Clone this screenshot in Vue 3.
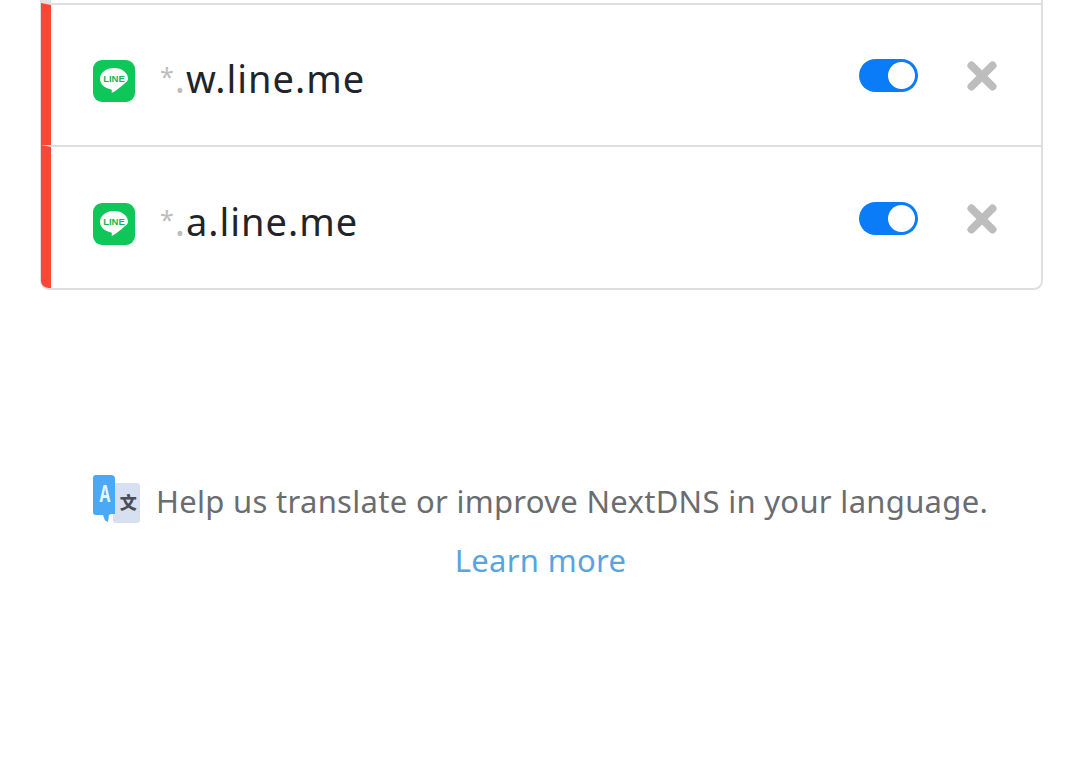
<template>
  <div class="page">
    <div class="card">
      <div class="stub"></div>
      <div v-for="domain in domains" :key="domain" class="row">
        <svg class="logo" viewBox="0 0 42 42">
          <rect width="42" height="42" rx="9" fill="#0fc659" />
          <path d="M21 8c-8 0-14 4.800-14 10.800 0 5.400 4.800 9.700 11.200 10.600.9.200.7 1 .5 2-.1.700-.1 1.600.9 1.100 1.500-.8 8-5 11-8.300 2.700-2 4.400-3.400 4.400-5.400C35 12.800 29 8 21 8z" fill="#fff" />
          <text x="21" y="22.300" class="logo-text">LINE</text>
        </svg>
        <div class="domain">
          <span class="star">*</span><span class="dot">.</span>{{ domain }}
        </div>
        <div class="toggle"><span class="knob"></span></div>
        <svg class="remove" viewBox="0 0 30 30">
          <path d="M4.500 4.500 25.500 25.500M25.500 4.500 4.500 25.500" stroke="#bdbdbd" stroke-width="8" stroke-linecap="round" />
        </svg>
      </div>
    </div>

    <div class="help">
      <div class="help-line">
        <svg class="translate" viewBox="0 0 47 48">
          <rect x="20" y="8" width="27" height="40" rx="3" fill="#d6e0f1" />
          <path d="M3 0h15a4 4 0 0 1 4 4v35h-4l-2 1-1 7-3-1.500-2-5.500H3a3 3 0 0 1-3-3V3a3 3 0 0 1 3-3z" fill="#4aa8f5" />
          <text x="6.500" y="27" class="translate-a" textLength="11" lengthAdjust="spacingAndGlyphs">A</text>
          <text x="35.500" y="34" class="translate-zh">文</text>
        </svg>
        <span>Help us translate or improve NextDNS in your language.</span>
      </div>
      <a class="learn">Learn more</a>
    </div>
  </div>
</template>

<script setup>
const domains = ['w.line.me', 'a.line.me'];
</script>

<style>
html,
body {
  background: #fff;
}
</style>

<style scoped>
.page {
  height: 767px;
  overflow: hidden;
  padding: 0 37px 0 40px;
  font-family: "Noto Sans", sans-serif;
}

.card {
  border: solid #dedede;
  border-width: 0 2px 2px 1px;
  border-radius: 0 0 9px 9px;
  overflow: hidden;
}

.stub {
  height: 3px;
  background: #fff;
  border-left: 10px solid #e2e2e2;
}

.row {
  display: flex;
  align-items: center;
  height: 140px;
  border-top: 2px solid #dedede;
  border-left: 10px solid #fb4539;
  padding: 0 44px 0 42px;
}

.row:last-child {
  padding-top: 1px;
}

.logo {
  width: 42px;
  height: 42px;
  margin-top: 11px;
  flex-shrink: 0;
}

.logo-text {
  font: 700 9.500px "Liberation Sans", sans-serif;
  fill: #12b857;
  text-anchor: middle;
}

.domain {
  margin-left: 25px;
  margin-top: 5px;
  flex: 1;
  font-size: 38px;
  letter-spacing: 1px;
  color: #212529;
  white-space: nowrap;
}

.star {
  color: #bdbdbd;
  font-size: 25px;
  vertical-align: 7px;
}

.dot {
  color: #bdbdbd;
}

.toggle {
  width: 59px;
  height: 33px;
  border-radius: 17px;
  background: #0a7cf8;
  margin-right: 49px;
  display: flex;
  align-items: center;
  justify-content: flex-end;
  padding-right: 3px;
  box-sizing: border-box;
}

.knob {
  width: 27px;
  height: 27px;
  border-radius: 50%;
  background: #fff;
}

.remove {
  width: 30px;
  height: 30px;
  flex-shrink: 0;
  margin-top: 2px;
}

.help {
  margin-top: 182px;
  padding-right: 2px;
  display: flex;
  flex-direction: column;
  align-items: center;
  font-size: 31px;
  letter-spacing: 0.3px;
  color: #6a6d70;
  line-height: 59px;
}

.help-line {
  display: flex;
  align-items: center;
  gap: 16px;
  white-space: nowrap;
}

.translate {
  width: 47px;
  height: 48px;
  flex-shrink: 0;
  margin-top: -6px;
}

.translate-a {
  font: 700 24px "Noto Sans", sans-serif;
  fill: #e6f3ff;
}

.translate-zh {
  font: 900 17px "Noto Sans CJK SC", sans-serif;
  fill: #4a4f57;
  text-anchor: middle;
}

.learn {
  color: #56a5e0;
}
</style>
